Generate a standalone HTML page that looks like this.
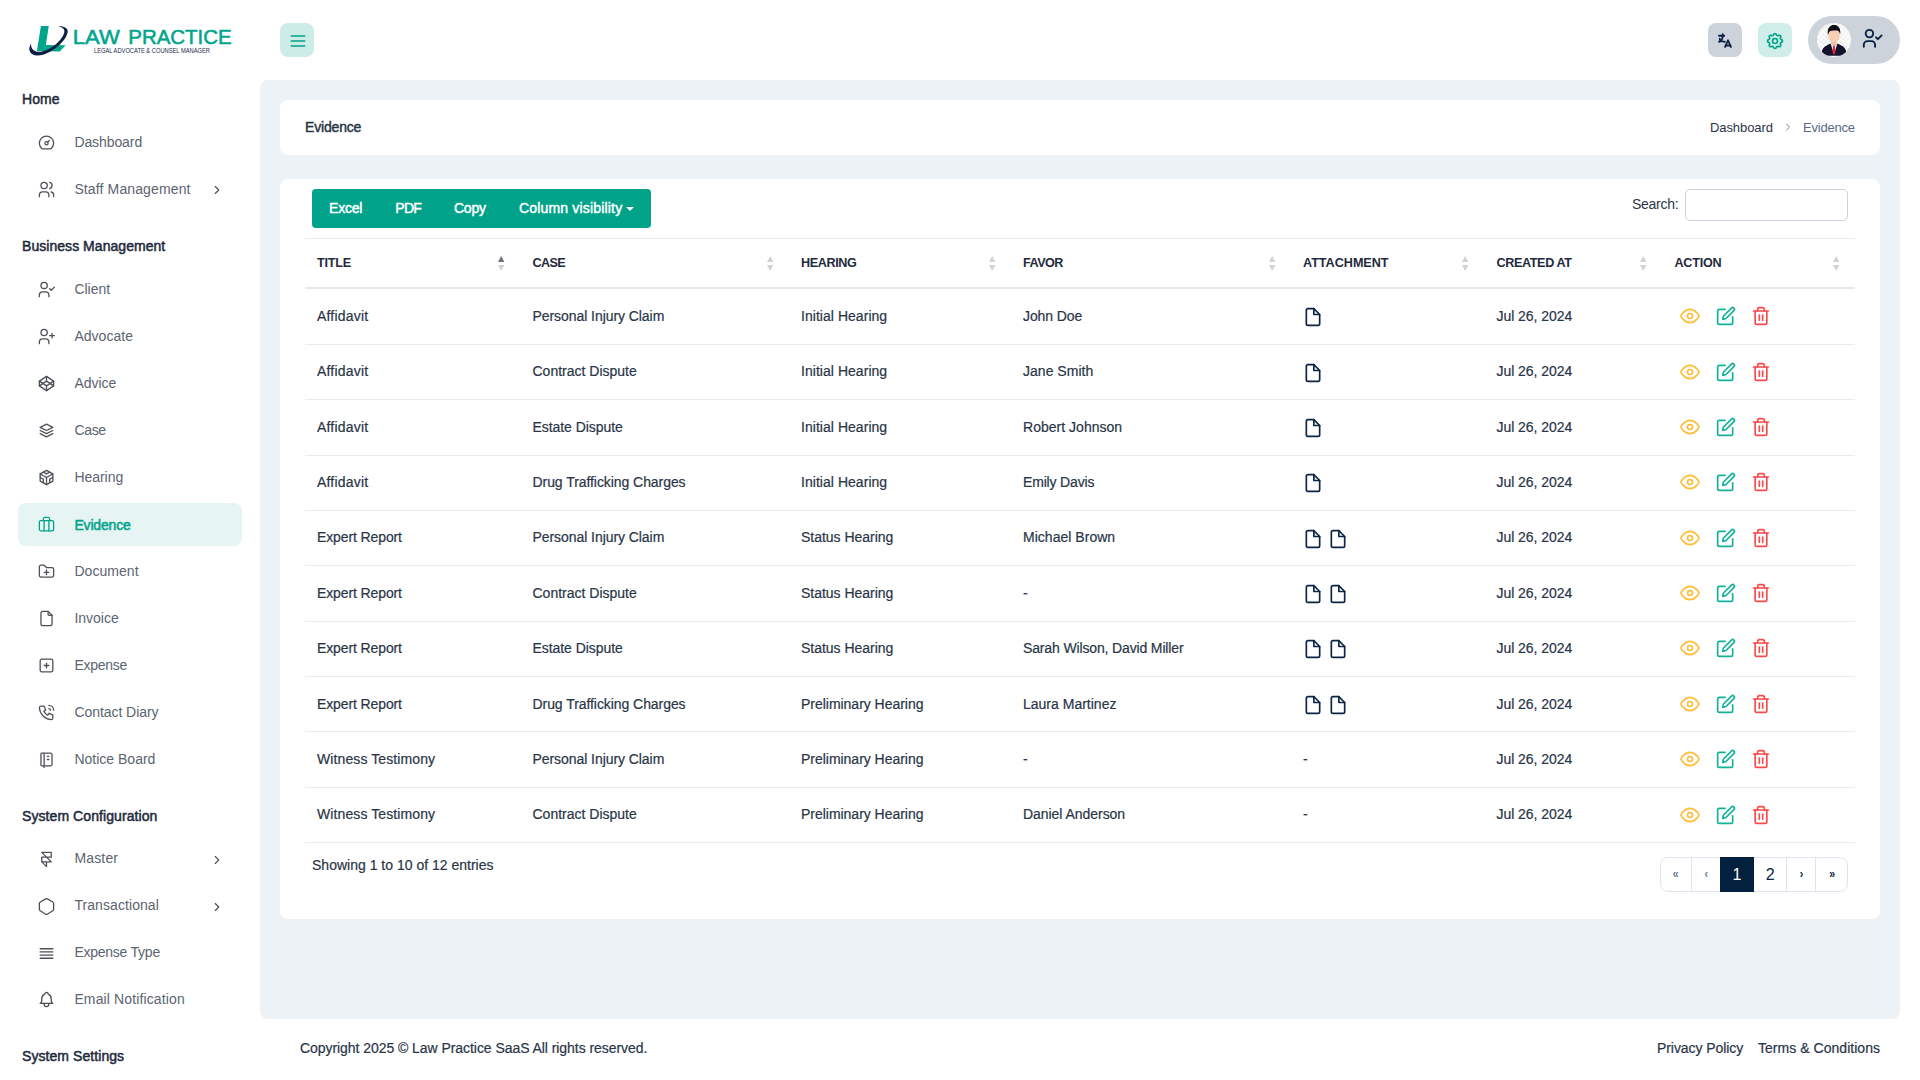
<!DOCTYPE html>
<html lang="en">
<head>
<meta charset="utf-8">
<title>Evidence - Law Practice</title>
<style>
*{box-sizing:border-box;margin:0;padding:0}
html,body{width:1920px;height:1080px;overflow:hidden;background:#fff}
body{font-family:"Liberation Sans",sans-serif;font-size:14px;color:#2a3547;position:relative}
svg{display:block}
.abs{position:absolute;white-space:nowrap}
#sidebar{position:absolute;left:0;top:0;width:260px;height:1080px;background:#fff;overflow:hidden}
.sec{position:absolute;left:22px;font-weight:400;font-size:14px;color:#1f2a3d;-webkit-text-stroke:0.5px #1f2a3d;white-space:nowrap;line-height:20px}
.item{position:absolute;left:18px;width:224px;height:43px;border-radius:8px;color:#5c6470;font-size:14px;white-space:nowrap}
.item .lb{position:absolute;left:56.4px;top:11.5px;line-height:20px}
.item.act{background:#e6f5f3;color:#00a389}
.item.act .lb{-webkit-text-stroke:0.5px #00a389}
.hbtn{position:absolute;top:23px;width:34px;height:34px;border-radius:8px}
#main{position:absolute;left:260px;top:80px;width:1640px;height:939px;background:#edf2f6;border-radius:8px}
.card{position:absolute;background:#fff;border-radius:8px}
.ttl{font-size:14px;color:#2a3547;line-height:20px;-webkit-text-stroke:0.45px #2a3547}
.bc1{font-size:13px;color:#2a3547;line-height:18px}
.bc2{font-size:13px;color:#5a6a85;line-height:18px}
.btng{position:absolute;background:#00a389;border-radius:4px;color:#fff}
.btng span{position:absolute;top:8.6px;line-height:20px;font-size:14px;-webkit-text-stroke:0.45px #fff;white-space:nowrap}
.caret{position:absolute;left:314px;top:17.5px;width:0;height:0;border-left:4px solid transparent;border-right:4px solid transparent;border-top:4px solid #fff}
.th{font-size:12.6px;font-weight:700;color:#1f2a3d;line-height:18px}
.td{font-size:14px;color:#2a3547;line-height:20px;-webkit-text-stroke:0.2px #2a3547}
.pg{position:absolute}
.pg b{position:absolute;left:0;top:0;width:188px;height:35px;border:1px solid #dfe5ef;border-radius:8px;background:#fff}
.pg span{position:absolute;top:0;height:35px;line-height:35px;text-align:center;font-size:16px;color:#0b2545}
.pg span.ar{font-size:13.5px;font-weight:700;line-height:34.5px;transform:scaleX(.78)}
.pg span.on{background:#03203f;color:#fff}
.pg i{position:absolute;top:1px;width:1px;height:33px;background:#dfe5ef}
.ft{font-size:14px;color:#2a3547;line-height:20px;-webkit-text-stroke:0.2px #2a3547}

</style>
</head>
<body>
<div id="sidebar">
<svg class="abs" style="left:24px;top:18px" width="216" height="46" viewBox="0 0 216 46">
<path d="M16.9 8.1 L24.75 8.1 L21.9 27 L41.6 27.3 L35.7 33.6 L12.9 33 Z" fill="#00a58c"/>
<path d="M34.1 8.4 C40 8 45 10.5 43.5 15 C41 25 24 38 13.5 37.5 C5 37 3.5 30.5 7.25 25.4 C6.5 30 9 33.5 15 33.8 C24 34 37 24 40 15.5 C41.5 11.5 39 9 34.1 8.4 Z" fill="#0b1f42"/>
<text y="25.75" font-family="'Liberation Sans',sans-serif" font-size="21" fill="#00a58c" stroke="#00a58c" stroke-width="0.55"><tspan x="48.8" textLength="47" lengthAdjust="spacingAndGlyphs">LAW</tspan> <tspan x="104.3" textLength="103.4" lengthAdjust="spacingAndGlyphs">PRACTICE</tspan></text>
<text x="70" y="34.8" font-family="'Liberation Sans',sans-serif" font-size="6.8" fill="#1c2a4a" textLength="116" lengthAdjust="spacingAndGlyphs">LEGAL ADVOCATE &amp; COUNSEL MANAGER</text>
</svg>
<div class="sec" style="top:89px;letter-spacing:0.055px;">Home</div>
<div class="item" style="top:120.5px"><svg viewBox="0 0 24 24" width="19" height="19" style="position:absolute;left:18.5px;top:12px;" fill="none" stroke="#4d5259" stroke-width="1.65" stroke-linecap="round" stroke-linejoin="round"><path d="M12 13m-2 0a2 2 0 1 0 4 0a2 2 0 1 0 -4 0"/><path d="M13.45 11.55l2.05 -2.05"/><path d="M6.4 20a9 9 0 1 1 11.2 0z"/></svg><span class="lb" style="top:11.5px;letter-spacing:-0.087px;">Dashboard</span></div>
<div class="item" style="top:167.5px"><svg viewBox="0 0 24 24" width="19" height="19" style="position:absolute;left:18.5px;top:12px;" fill="none" stroke="#4d5259" stroke-width="1.65" stroke-linecap="round" stroke-linejoin="round"><path d="M9 7m-4 0a4 4 0 1 0 8 0a4 4 0 1 0 -8 0"/><path d="M3 21v-2a4 4 0 0 1 4 -4h4a4 4 0 0 1 4 4v2"/><path d="M16 3.13a4 4 0 0 1 0 7.75"/><path d="M21 21v-2a4 4 0 0 0 -3 -3.85"/></svg><span class="lb" style="top:11.5px;letter-spacing:0.128px;">Staff Management</span><svg viewBox="0 0 24 24" width="14" height="14" style="position:absolute;left:192px;top:15.5px;" fill="none" stroke="#4d5259" stroke-width="2" stroke-linecap="round" stroke-linejoin="round"><path d="M9 6l6 6l-6 6"/></svg></div>
<div class="sec" style="top:236px;letter-spacing:0.046px;">Business Management</div>
<div class="item" style="top:267.5px"><svg viewBox="0 0 24 24" width="19" height="19" style="position:absolute;left:18.5px;top:12px;" fill="none" stroke="#4d5259" stroke-width="1.65" stroke-linecap="round" stroke-linejoin="round"><circle cx="9" cy="7" r="4"/><path d="M3 21v-2a4 4 0 0 1 4 -4h4a4 4 0 0 1 4 4v2"/><path d="M16 11l2 2l4 -4"/></svg><span class="lb" style="top:11.5px;letter-spacing:-0.023px;">Client</span></div>
<div class="item" style="top:314.5px"><svg viewBox="0 0 24 24" width="19" height="19" style="position:absolute;left:18.5px;top:12px;" fill="none" stroke="#4d5259" stroke-width="1.65" stroke-linecap="round" stroke-linejoin="round"><circle cx="9" cy="7" r="4"/><path d="M3 21v-2a4 4 0 0 1 4 -4h4a4 4 0 0 1 4 4v2"/><path d="M16 11h6m-3 -3v6"/></svg><span class="lb" style="top:11.5px;letter-spacing:0.033px;">Advocate</span></div>
<div class="item" style="top:361.5px"><svg viewBox="0 0 24 24" width="19" height="19" style="position:absolute;left:18.5px;top:12px;" fill="none" stroke="#4d5259" stroke-width="1.65" stroke-linecap="round" stroke-linejoin="round"><path d="M3 15l9 6l9 -6l-9 -6l-9 6"/><path d="M3 9l9 6l9 -6l-9 -6l-9 6"/><path d="M3 9l0 6"/><path d="M21 9l0 6"/><path d="M12 3l0 6"/><path d="M12 15l0 6"/></svg><span class="lb" style="top:11.5px;letter-spacing:-0.01px;">Advice</span></div>
<div class="item" style="top:408.5px"><svg viewBox="0 0 24 24" width="19" height="19" style="position:absolute;left:18.5px;top:12px;" fill="none" stroke="#4d5259" stroke-width="1.65" stroke-linecap="round" stroke-linejoin="round"><path d="M12 4l-8 4l8 4l8 -4l-8 -4"/><path d="M4 12l8 4l8 -4"/><path d="M4 16l8 4l8 -4"/></svg><span class="lb" style="top:11.5px;letter-spacing:-0.324px;">Case</span></div>
<div class="item" style="top:455.5px"><svg viewBox="0 0 24 24" width="19" height="19" style="position:absolute;left:18.5px;top:12px;" fill="none" stroke="#4d5259" stroke-width="1.65" stroke-linecap="round" stroke-linejoin="round"><path d="M20 7.5v9l-4 2.25l-4 2.25l-4 -2.25l-4 -2.25v-9l4 -2.25l4 -2.25l4 2.25z"/><path d="M12 12l4 -2.25l4 -2.25"/><path d="M12 12l0 9"/><path d="M12 12l-4 -2.25l-4 -2.25"/><path d="M20 12l-4 2v4.75"/><path d="M4 12l4 2l0 4.75"/><path d="M8 5.25l4 2.25l4 -2.25"/></svg><span class="lb" style="top:11.5px;letter-spacing:-0.036px;">Hearing</span></div>
<div class="item act" style="top:503.0px"><svg viewBox="0 0 24 24" width="19" height="19" style="position:absolute;left:18.5px;top:12px;" fill="none" stroke="#00a389" stroke-width="1.65" stroke-linecap="round" stroke-linejoin="round"><rect x="3" y="7" width="18" height="13" rx="2"/><path d="M8 7v-2a2 2 0 0 1 2 -2h4a2 2 0 0 1 2 2v2"/><path d="M9 7v13"/><path d="M15 7v13"/></svg><span class="lb" style="top:11.5px;letter-spacing:-0.17px;">Evidence</span></div>
<div class="item" style="top:549.5px"><svg viewBox="0 0 24 24" width="19" height="19" style="position:absolute;left:18.5px;top:12px;" fill="none" stroke="#4d5259" stroke-width="1.65" stroke-linecap="round" stroke-linejoin="round"><path d="M5 4h4l3 3h7a2 2 0 0 1 2 2v8a2 2 0 0 1 -2 2h-14a2 2 0 0 1 -2 -2v-11a2 2 0 0 1 2 -2"/><path d="M12 10v6"/><path d="M9 13h6"/></svg><span class="lb" style="top:11.5px;letter-spacing:0.053px;">Document</span></div>
<div class="item" style="top:596.5px"><svg viewBox="0 0 24 24" width="19" height="19" style="position:absolute;left:18.5px;top:12px;" fill="none" stroke="#4d5259" stroke-width="1.65" stroke-linecap="round" stroke-linejoin="round"><path d="M14 3v4a1 1 0 0 0 1 1h4"/><path d="M17 21h-10a2 2 0 0 1 -2 -2v-14a2 2 0 0 1 2 -2h7l5 5v11a2 2 0 0 1 -2 2z"/></svg><span class="lb" style="top:11.5px;letter-spacing:0.0px;">Invoice</span></div>
<div class="item" style="top:643.5px"><svg viewBox="0 0 24 24" width="19" height="19" style="position:absolute;left:18.5px;top:12px;" fill="none" stroke="#4d5259" stroke-width="1.65" stroke-linecap="round" stroke-linejoin="round"><rect x="4" y="4" width="16" height="16" rx="2"/><path d="M9 12h6"/><path d="M12 9v6"/></svg><span class="lb" style="top:11.5px;letter-spacing:-0.272px;">Expense</span></div>
<div class="item" style="top:690.5px"><svg viewBox="0 0 24 24" width="19" height="19" style="position:absolute;left:18.5px;top:12px;" fill="none" stroke="#4d5259" stroke-width="1.65" stroke-linecap="round" stroke-linejoin="round"><path d="M5 4h4l2 5l-2.5 1.5a11 11 0 0 0 5 5l1.5 -2.5l5 2v4a2 2 0 0 1 -2 2a16 16 0 0 1 -15 -15a2 2 0 0 1 2 -2"/><path d="M15 7a2 2 0 0 1 2 2"/><path d="M15 3a6 6 0 0 1 6 6"/></svg><span class="lb" style="top:11.5px;letter-spacing:-0.054px;">Contact Diary</span></div>
<div class="item" style="top:737.5px"><svg viewBox="0 0 24 24" width="19" height="19" style="position:absolute;left:18.5px;top:12px;" fill="none" stroke="#4d5259" stroke-width="1.65" stroke-linecap="round" stroke-linejoin="round"><path d="M6 4h11a2 2 0 0 1 2 2v12a2 2 0 0 1 -2 2h-11a1 1 0 0 1 -1 -1v-14a1 1 0 0 1 1 -1m3 0v18"/><path d="M13 8l2 0"/><path d="M13 12l2 0"/></svg><span class="lb" style="top:11.5px;letter-spacing:0.007px;">Notice Board</span></div>
<div class="sec" style="top:806px;letter-spacing:0.077px;">System Configuration</div>
<div class="item" style="top:837.5px"><svg viewBox="0 0 24 24" width="19" height="19" style="position:absolute;left:18.5px;top:12px;" fill="none" stroke="#4d5259" stroke-width="1.65" stroke-linecap="round" stroke-linejoin="round"><path d="M6 15h12l-12 -12h12v6h-12v6l6 6v-6"/></svg><span class="lb" style="top:10.2px;letter-spacing:0.169px;">Master</span><svg viewBox="0 0 24 24" width="14" height="14" style="position:absolute;left:192px;top:15.5px;" fill="none" stroke="#4d5259" stroke-width="2" stroke-linecap="round" stroke-linejoin="round"><path d="M9 6l6 6l-6 6"/></svg></div>
<div class="item" style="top:884.8px"><svg viewBox="0 0 24 24" width="19" height="19" style="position:absolute;left:18.5px;top:12px;" fill="none" stroke="#4d5259" stroke-width="1.65" stroke-linecap="round" stroke-linejoin="round"><path d="M19.875 6.27a2.225 2.225 0 0 1 1.125 1.948v7.284c0 .809 -.443 1.555 -1.158 1.948l-6.75 4.27a2.269 2.269 0 0 1 -2.184 0l-6.75 -4.27a2.225 2.225 0 0 1 -1.158 -1.948v-7.285c0 -.809 .443 -1.554 1.158 -1.947l6.75 -3.98a2.33 2.33 0 0 1 2.25 0l6.75 3.98h-.033z"/></svg><span class="lb" style="top:10.2px;letter-spacing:0.078px;">Transactional</span><svg viewBox="0 0 24 24" width="14" height="14" style="position:absolute;left:192px;top:15.5px;" fill="none" stroke="#4d5259" stroke-width="2" stroke-linecap="round" stroke-linejoin="round"><path d="M9 6l6 6l-6 6"/></svg></div>
<div class="item" style="top:931.5px"><svg viewBox="0 0 24 24" width="19" height="19" style="position:absolute;left:18.5px;top:12px;" fill="none" stroke="#4d5259" stroke-width="1.65" stroke-linecap="round" stroke-linejoin="round"><path d="M4 6h16"/><path d="M4 10h16"/><path d="M4 14h16"/><path d="M4 18h16"/></svg><span class="lb" style="top:10.2px;letter-spacing:-0.245px;">Expense Type</span></div>
<div class="item" style="top:978.2px"><svg viewBox="0 0 24 24" width="19" height="19" style="position:absolute;left:18.5px;top:12px;" fill="none" stroke="#4d5259" stroke-width="1.65" stroke-linecap="round" stroke-linejoin="round"><path d="M10 5a2 2 0 1 1 4 0a7 7 0 0 1 4 6v3a4 4 0 0 0 2 3h-16a4 4 0 0 0 2 -3v-3a7 7 0 0 1 4 -6"/><path d="M9 17v1a3 3 0 0 0 6 0v-1"/></svg><span class="lb" style="top:10.7px;letter-spacing:0.13px;">Email Notification</span></div>
<div class="sec" style="top:1046px;letter-spacing:0.069px;">System Settings</div>
</div>
<div class="hbtn" style="left:280px;background:#cdece7"><svg viewBox="0 0 24 24" width="20" height="20" style="position:absolute;left:7.5px;top:8px;" fill="none" stroke="#00a389" stroke-width="2" stroke-linecap="round" stroke-linejoin="round"><path d="M4 6h16"/><path d="M4 12h16"/><path d="M4 18h16"/></svg></div>
<div class="hbtn" style="left:1708px;background:#cdd3db"><svg viewBox="0 0 24 24" width="18" height="18" style="position:absolute;left:8px;top:9.3px;" fill="none" stroke="#0b1f42" stroke-width="2.4" stroke-linecap="round" stroke-linejoin="round"><path d="M4 5h7"/><path d="M9 3v2c0 4.418 -2.239 8 -5 8"/><path d="M5 9c0 2.144 2.952 3.908 6.7 4"/><path d="M12 20l4 -9l4 9"/><path d="M19.1 18h-6.2"/></svg></div>
<div class="hbtn" style="left:1758px;background:#d0eee9"><svg viewBox="0 0 24 24" width="20" height="20" style="position:absolute;left:7.4px;top:7.6px;" fill="none" stroke="#00a389" stroke-width="2" stroke-linecap="round" stroke-linejoin="round"><path d="M10.325 4.317c.426 -1.756 2.924 -1.756 3.35 0a1.724 1.724 0 0 0 2.573 1.066c1.543 -.94 3.31 .826 2.37 2.37a1.724 1.724 0 0 0 1.065 2.572c1.756 .426 1.756 2.924 0 3.35a1.724 1.724 0 0 0 -1.066 2.573c.94 1.543 -.826 3.31 -2.37 2.37a1.724 1.724 0 0 0 -2.572 1.065c-.426 1.756 -2.924 1.756 -3.35 0a1.724 1.724 0 0 0 -2.573 -1.066c-1.543 .94 -3.31 -.826 -2.37 -2.37a1.724 1.724 0 0 0 -1.065 -2.572c-1.756 -.426 -1.756 -2.924 0 -3.35a1.724 1.724 0 0 0 1.066 -2.573c-.94 -1.543 .826 -3.31 2.37 -2.37c1 .608 2.296 .07 2.572 -1.065z"/><path d="M9 12a3 3 0 1 0 6 0a3 3 0 0 0 -6 0"/></svg></div>
<div class="abs" style="left:1808px;top:16px;width:92px;height:48px;border-radius:24px;background:#cdd3db"><svg class="abs" style="left:9px;top:7px" width="34" height="34" viewBox="0 0 34 34">
<defs><clipPath id="avc"><circle cx="17" cy="17" r="17"/></clipPath>
<pattern id="chk" width="5" height="5" patternUnits="userSpaceOnUse"><rect width="5" height="5" fill="#fff"/><rect width="2.5" height="2.5" fill="#efefef"/><rect x="2.5" y="2.5" width="2.5" height="2.5" fill="#efefef"/></pattern></defs>
<g clip-path="url(#avc)"><rect width="34" height="34" fill="url(#chk)"/>
<path d="M4.5 32.3 C4.5 24.5 8 23 13.3 20.8 L20.7 20.8 C26 23 29.5 24.5 29.5 32.3 C25 33 9 33 4.5 32.3 Z" fill="#14142b"/>
<path d="M13.6 20.6 L17 31.5 L20.4 20.6 Z" fill="#e4f1f4"/>
<path d="M16.2 22.3 L17.8 22.3 L18.4 29.5 L17 31.8 L15.6 29.5 Z" fill="#e0263c"/>
<rect x="14.4" y="15" width="5.2" height="7.4" fill="#efc0a4"/>
<ellipse cx="17" cy="12.6" rx="5.8" ry="7" fill="#f7cfb5"/>
<path d="M10.9 12 C9.8 4.5 13.5 2 17 2 C20.8 2 24.2 4.5 23.1 12 C22.7 9 21.6 7.3 19.4 7.5 C16 7.8 13.2 7.2 12.3 8.8 C11.6 10 11.3 11 10.9 12 Z" fill="#0d0d12"/>
</g></svg><svg viewBox="0 0 24 24" width="22.5" height="22.5" style="position:absolute;left:52.8px;top:11.3px;" fill="none" stroke="#0b1f42" stroke-width="2" stroke-linecap="round" stroke-linejoin="round"><circle cx="9" cy="7" r="4"/><path d="M3 21v-2a4 4 0 0 1 4 -4h4a4 4 0 0 1 4 4v2"/><path d="M16 11l2 2l4 -4"/></svg></div>
<div id="main">
<div class="card" style="left:20px;top:20px;width:1600px;height:55px"><span class="abs ttl" style="left:25px;top:17px;letter-spacing:-0.17px;">Evidence</span><span class="abs bc1" style="left:1430px;top:18.7px;letter-spacing:-0.082px;">Dashboard</span><svg viewBox="0 0 24 24" width="12" height="12" style="position:absolute;left:1501.5px;top:20.8px;" fill="none" stroke="#5a6a85" stroke-width="1.6" stroke-linecap="round" stroke-linejoin="round"><path d="M9 6l6 6l-6 6"/></svg><span class="abs bc2" style="left:1523px;top:18.7px;letter-spacing:-0.211px;">Evidence</span></div>
<div class="card" style="left:20px;top:99px;width:1600px;height:740px">
<div class="btng" style="left:32px;top:10px;width:339px;height:39px"><span style="left:17px;letter-spacing:-0.206px;">Excel</span><span style="left:83.3px;letter-spacing:-0.734px;">PDF</span><span style="left:142px;letter-spacing:-0.238px;">Copy</span><span style="left:207px;letter-spacing:0.173px;">Column visibility</span><i class="caret"></i></div>
<span class="abs" style="left:1352px;top:16px;line-height:18px;color:#2a3547;letter-spacing:-0.263px;">Search:</span>
<div class="abs" style="left:1405px;top:10px;width:163px;height:32px;border:1px solid #c9d1dc;border-radius:5px;background:#fff"></div>
<div class="abs" style="left:25px;top:59px;width:1550px;height:1px;background:#ebebeb"></div>
<span class="abs th" style="left:37px;top:75px;letter-spacing:-0.181px;">TITLE</span>
<svg class="abs" style="left:218.3px;top:77px" width="6.4" height="15" viewBox="0 0 7 15" preserveAspectRatio="none"><path d="M3.5 0 L7 6 L0 6 Z" fill="#6c757d"/><path d="M0 9 L7 9 L3.5 15 Z" fill="#d2d2d2"/></svg>
<span class="abs th" style="left:252.5px;top:75px;letter-spacing:-0.609px;">CASE</span>
<svg class="abs" style="left:487.3px;top:77px" width="6.4" height="15" viewBox="0 0 7 15" preserveAspectRatio="none"><path d="M3.5 0 L7 6 L0 6 Z" fill="#d2d2d2"/><path d="M0 9 L7 9 L3.5 15 Z" fill="#d2d2d2"/></svg>
<span class="abs th" style="left:521px;top:75px;letter-spacing:-0.384px;">HEARING</span>
<svg class="abs" style="left:709.3px;top:77px" width="6.4" height="15" viewBox="0 0 7 15" preserveAspectRatio="none"><path d="M3.5 0 L7 6 L0 6 Z" fill="#d2d2d2"/><path d="M0 9 L7 9 L3.5 15 Z" fill="#d2d2d2"/></svg>
<span class="abs th" style="left:743px;top:75px;letter-spacing:-0.512px;">FAVOR</span>
<svg class="abs" style="left:989.3px;top:77px" width="6.4" height="15" viewBox="0 0 7 15" preserveAspectRatio="none"><path d="M3.5 0 L7 6 L0 6 Z" fill="#d2d2d2"/><path d="M0 9 L7 9 L3.5 15 Z" fill="#d2d2d2"/></svg>
<span class="abs th" style="left:1023px;top:75px;letter-spacing:-0.003px;">ATTACHMENT</span>
<svg class="abs" style="left:1182.3px;top:77px" width="6.4" height="15" viewBox="0 0 7 15" preserveAspectRatio="none"><path d="M3.5 0 L7 6 L0 6 Z" fill="#d2d2d2"/><path d="M0 9 L7 9 L3.5 15 Z" fill="#d2d2d2"/></svg>
<span class="abs th" style="left:1216.5px;top:75px;letter-spacing:-0.366px;">CREATED AT</span>
<svg class="abs" style="left:1360.3px;top:77px" width="6.4" height="15" viewBox="0 0 7 15" preserveAspectRatio="none"><path d="M3.5 0 L7 6 L0 6 Z" fill="#d2d2d2"/><path d="M0 9 L7 9 L3.5 15 Z" fill="#d2d2d2"/></svg>
<span class="abs th" style="left:1394.5px;top:75px;letter-spacing:-0.224px;">ACTION</span>
<svg class="abs" style="left:1553.3px;top:77px" width="6.4" height="15" viewBox="0 0 7 15" preserveAspectRatio="none"><path d="M3.5 0 L7 6 L0 6 Z" fill="#d2d2d2"/><path d="M0 9 L7 9 L3.5 15 Z" fill="#d2d2d2"/></svg>
<div class="abs" style="left:25px;top:108px;width:1550px;height:2px;background:#e8e8e8"></div>
<span class="abs td" style="left:37px;top:126.94999999999999px;letter-spacing:0.191px;">Affidavit</span>
<span class="abs td" style="left:252.5px;top:126.94999999999999px;letter-spacing:-0.063px;">Personal Injury Claim</span>
<span class="abs td" style="left:521px;top:126.94999999999999px;letter-spacing:0.039px;">Initial Hearing</span>
<span class="abs td" style="left:743px;top:126.94999999999999px;letter-spacing:-0.088px;">John Doe</span>
<svg viewBox="0 0 24 24" width="20" height="20" style="position:absolute;left:1023.2px;top:128.05px;" fill="none" stroke="#0b2545" stroke-width="2" stroke-linecap="round" stroke-linejoin="round"><path d="M13 2H6a2 2 0 0 0-2 2v16a2 2 0 0 0 2 2h12a2 2 0 0 0 2-2V9z"/><polyline points="13 2 13 9 20 9"/></svg>
<span class="abs td" style="left:1216.5px;top:126.94999999999999px;letter-spacing:-0.044px;">Jul 26, 2024</span>
<svg viewBox="0 0 24 24" width="20" height="20" style="position:absolute;left:1400px;top:127.05000000000001px;" fill="none" stroke="#ffbc34" stroke-width="2" stroke-linecap="round" stroke-linejoin="round"><path d="M1 12s4-8 11-8 11 8 11 8-4 8-11 8-11-8-11-8z"/><circle cx="12" cy="12" r="3"/></svg>
<svg viewBox="0 0 24 24" width="20" height="20" style="position:absolute;left:1436px;top:127.09999999999997px;" fill="none" stroke="#13b19a" stroke-width="2" stroke-linecap="round" stroke-linejoin="round"><path d="M11 4H4a2 2 0 0 0-2 2v14a2 2 0 0 0 2 2h14a2 2 0 0 0 2-2v-7"/><path d="M18.5 2.5a2.121 2.121 0 0 1 3 3L12 15l-4 1 1-4 9.5-9.5z"/></svg>
<svg viewBox="0 0 24 24" width="20" height="20" style="position:absolute;left:1471px;top:127.09999999999997px;" fill="none" stroke="#fa4b4b" stroke-width="2" stroke-linecap="round" stroke-linejoin="round"><polyline points="3 6 5 6 21 6"/><path d="M19 6v14a2 2 0 0 1-2 2H7a2 2 0 0 1-2-2V6m3 0V4a2 2 0 0 1 2-2h4a2 2 0 0 1 2 2v2"/><line x1="10" y1="11" x2="10" y2="17"/><line x1="14" y1="11" x2="14" y2="17"/></svg>
<div class="abs" style="left:25px;top:164.5px;width:1550px;height:1px;background:#ebebeb"></div>
<span class="abs td" style="left:37px;top:182.45px;letter-spacing:0.191px;">Affidavit</span>
<span class="abs td" style="left:252.5px;top:182.45px;letter-spacing:0.0px;">Contract Dispute</span>
<span class="abs td" style="left:521px;top:182.45px;letter-spacing:0.039px;">Initial Hearing</span>
<span class="abs td" style="left:743px;top:182.45px;letter-spacing:0.022px;">Jane Smith</span>
<svg viewBox="0 0 24 24" width="20" height="20" style="position:absolute;left:1023.2px;top:183.55px;" fill="none" stroke="#0b2545" stroke-width="2" stroke-linecap="round" stroke-linejoin="round"><path d="M13 2H6a2 2 0 0 0-2 2v16a2 2 0 0 0 2 2h12a2 2 0 0 0 2-2V9z"/><polyline points="13 2 13 9 20 9"/></svg>
<span class="abs td" style="left:1216.5px;top:182.45px;letter-spacing:-0.044px;">Jul 26, 2024</span>
<svg viewBox="0 0 24 24" width="20" height="20" style="position:absolute;left:1400px;top:182.55px;" fill="none" stroke="#ffbc34" stroke-width="2" stroke-linecap="round" stroke-linejoin="round"><path d="M1 12s4-8 11-8 11 8 11 8-4 8-11 8-11-8-11-8z"/><circle cx="12" cy="12" r="3"/></svg>
<svg viewBox="0 0 24 24" width="20" height="20" style="position:absolute;left:1436px;top:182.59999999999997px;" fill="none" stroke="#13b19a" stroke-width="2" stroke-linecap="round" stroke-linejoin="round"><path d="M11 4H4a2 2 0 0 0-2 2v14a2 2 0 0 0 2 2h14a2 2 0 0 0 2-2v-7"/><path d="M18.5 2.5a2.121 2.121 0 0 1 3 3L12 15l-4 1 1-4 9.5-9.5z"/></svg>
<svg viewBox="0 0 24 24" width="20" height="20" style="position:absolute;left:1471px;top:182.59999999999997px;" fill="none" stroke="#fa4b4b" stroke-width="2" stroke-linecap="round" stroke-linejoin="round"><polyline points="3 6 5 6 21 6"/><path d="M19 6v14a2 2 0 0 1-2 2H7a2 2 0 0 1-2-2V6m3 0V4a2 2 0 0 1 2-2h4a2 2 0 0 1 2 2v2"/><line x1="10" y1="11" x2="10" y2="17"/><line x1="14" y1="11" x2="14" y2="17"/></svg>
<div class="abs" style="left:25px;top:220.0px;width:1550px;height:1px;background:#ebebeb"></div>
<span class="abs td" style="left:37px;top:237.95px;letter-spacing:0.191px;">Affidavit</span>
<span class="abs td" style="left:252.5px;top:237.95px;letter-spacing:-0.057px;">Estate Dispute</span>
<span class="abs td" style="left:521px;top:237.95px;letter-spacing:0.039px;">Initial Hearing</span>
<span class="abs td" style="left:743px;top:237.95px;letter-spacing:0.021px;">Robert Johnson</span>
<svg viewBox="0 0 24 24" width="20" height="20" style="position:absolute;left:1023.2px;top:239.05px;" fill="none" stroke="#0b2545" stroke-width="2" stroke-linecap="round" stroke-linejoin="round"><path d="M13 2H6a2 2 0 0 0-2 2v16a2 2 0 0 0 2 2h12a2 2 0 0 0 2-2V9z"/><polyline points="13 2 13 9 20 9"/></svg>
<span class="abs td" style="left:1216.5px;top:237.95px;letter-spacing:-0.044px;">Jul 26, 2024</span>
<svg viewBox="0 0 24 24" width="20" height="20" style="position:absolute;left:1400px;top:238.05px;" fill="none" stroke="#ffbc34" stroke-width="2" stroke-linecap="round" stroke-linejoin="round"><path d="M1 12s4-8 11-8 11 8 11 8-4 8-11 8-11-8-11-8z"/><circle cx="12" cy="12" r="3"/></svg>
<svg viewBox="0 0 24 24" width="20" height="20" style="position:absolute;left:1436px;top:238.09999999999997px;" fill="none" stroke="#13b19a" stroke-width="2" stroke-linecap="round" stroke-linejoin="round"><path d="M11 4H4a2 2 0 0 0-2 2v14a2 2 0 0 0 2 2h14a2 2 0 0 0 2-2v-7"/><path d="M18.5 2.5a2.121 2.121 0 0 1 3 3L12 15l-4 1 1-4 9.5-9.5z"/></svg>
<svg viewBox="0 0 24 24" width="20" height="20" style="position:absolute;left:1471px;top:238.09999999999997px;" fill="none" stroke="#fa4b4b" stroke-width="2" stroke-linecap="round" stroke-linejoin="round"><polyline points="3 6 5 6 21 6"/><path d="M19 6v14a2 2 0 0 1-2 2H7a2 2 0 0 1-2-2V6m3 0V4a2 2 0 0 1 2-2h4a2 2 0 0 1 2 2v2"/><line x1="10" y1="11" x2="10" y2="17"/><line x1="14" y1="11" x2="14" y2="17"/></svg>
<div class="abs" style="left:25px;top:275.5px;width:1550px;height:1px;background:#ebebeb"></div>
<span class="abs td" style="left:37px;top:293.2px;letter-spacing:0.191px;">Affidavit</span>
<span class="abs td" style="left:252.5px;top:293.2px;letter-spacing:-0.064px;">Drug Trafficking Charges</span>
<span class="abs td" style="left:521px;top:293.2px;letter-spacing:0.039px;">Initial Hearing</span>
<span class="abs td" style="left:743px;top:293.2px;letter-spacing:-0.169px;">Emily Davis</span>
<svg viewBox="0 0 24 24" width="20" height="20" style="position:absolute;left:1023.2px;top:294.3px;" fill="none" stroke="#0b2545" stroke-width="2" stroke-linecap="round" stroke-linejoin="round"><path d="M13 2H6a2 2 0 0 0-2 2v16a2 2 0 0 0 2 2h12a2 2 0 0 0 2-2V9z"/><polyline points="13 2 13 9 20 9"/></svg>
<span class="abs td" style="left:1216.5px;top:293.2px;letter-spacing:-0.044px;">Jul 26, 2024</span>
<svg viewBox="0 0 24 24" width="20" height="20" style="position:absolute;left:1400px;top:293.3px;" fill="none" stroke="#ffbc34" stroke-width="2" stroke-linecap="round" stroke-linejoin="round"><path d="M1 12s4-8 11-8 11 8 11 8-4 8-11 8-11-8-11-8z"/><circle cx="12" cy="12" r="3"/></svg>
<svg viewBox="0 0 24 24" width="20" height="20" style="position:absolute;left:1436px;top:293.34999999999997px;" fill="none" stroke="#13b19a" stroke-width="2" stroke-linecap="round" stroke-linejoin="round"><path d="M11 4H4a2 2 0 0 0-2 2v14a2 2 0 0 0 2 2h14a2 2 0 0 0 2-2v-7"/><path d="M18.5 2.5a2.121 2.121 0 0 1 3 3L12 15l-4 1 1-4 9.5-9.5z"/></svg>
<svg viewBox="0 0 24 24" width="20" height="20" style="position:absolute;left:1471px;top:293.34999999999997px;" fill="none" stroke="#fa4b4b" stroke-width="2" stroke-linecap="round" stroke-linejoin="round"><polyline points="3 6 5 6 21 6"/><path d="M19 6v14a2 2 0 0 1-2 2H7a2 2 0 0 1-2-2V6m3 0V4a2 2 0 0 1 2-2h4a2 2 0 0 1 2 2v2"/><line x1="10" y1="11" x2="10" y2="17"/><line x1="14" y1="11" x2="14" y2="17"/></svg>
<div class="abs" style="left:25px;top:330.5px;width:1550px;height:1px;background:#ebebeb"></div>
<span class="abs td" style="left:37px;top:348.45000000000005px;letter-spacing:-0.114px;">Expert Report</span>
<span class="abs td" style="left:252.5px;top:348.45000000000005px;letter-spacing:-0.063px;">Personal Injury Claim</span>
<span class="abs td" style="left:521px;top:348.45000000000005px;letter-spacing:-0.023px;">Status Hearing</span>
<span class="abs td" style="left:743px;top:348.45000000000005px;letter-spacing:0.025px;">Michael Brown</span>
<svg viewBox="0 0 24 24" width="20" height="20" style="position:absolute;left:1023.2px;top:349.55000000000007px;" fill="none" stroke="#0b2545" stroke-width="2" stroke-linecap="round" stroke-linejoin="round"><path d="M13 2H6a2 2 0 0 0-2 2v16a2 2 0 0 0 2 2h12a2 2 0 0 0 2-2V9z"/><polyline points="13 2 13 9 20 9"/></svg>
<svg viewBox="0 0 24 24" width="20" height="20" style="position:absolute;left:1047.5px;top:349.55000000000007px;" fill="none" stroke="#0b2545" stroke-width="2" stroke-linecap="round" stroke-linejoin="round"><path d="M13 2H6a2 2 0 0 0-2 2v16a2 2 0 0 0 2 2h12a2 2 0 0 0 2-2V9z"/><polyline points="13 2 13 9 20 9"/></svg>
<span class="abs td" style="left:1216.5px;top:348.45000000000005px;letter-spacing:-0.044px;">Jul 26, 2024</span>
<svg viewBox="0 0 24 24" width="20" height="20" style="position:absolute;left:1400px;top:348.55000000000007px;" fill="none" stroke="#ffbc34" stroke-width="2" stroke-linecap="round" stroke-linejoin="round"><path d="M1 12s4-8 11-8 11 8 11 8-4 8-11 8-11-8-11-8z"/><circle cx="12" cy="12" r="3"/></svg>
<svg viewBox="0 0 24 24" width="20" height="20" style="position:absolute;left:1436px;top:348.6px;" fill="none" stroke="#13b19a" stroke-width="2" stroke-linecap="round" stroke-linejoin="round"><path d="M11 4H4a2 2 0 0 0-2 2v14a2 2 0 0 0 2 2h14a2 2 0 0 0 2-2v-7"/><path d="M18.5 2.5a2.121 2.121 0 0 1 3 3L12 15l-4 1 1-4 9.5-9.5z"/></svg>
<svg viewBox="0 0 24 24" width="20" height="20" style="position:absolute;left:1471px;top:348.6px;" fill="none" stroke="#fa4b4b" stroke-width="2" stroke-linecap="round" stroke-linejoin="round"><polyline points="3 6 5 6 21 6"/><path d="M19 6v14a2 2 0 0 1-2 2H7a2 2 0 0 1-2-2V6m3 0V4a2 2 0 0 1 2-2h4a2 2 0 0 1 2 2v2"/><line x1="10" y1="11" x2="10" y2="17"/><line x1="14" y1="11" x2="14" y2="17"/></svg>
<div class="abs" style="left:25px;top:386.0px;width:1550px;height:1px;background:#ebebeb"></div>
<span class="abs td" style="left:37px;top:403.95000000000005px;letter-spacing:-0.114px;">Expert Report</span>
<span class="abs td" style="left:252.5px;top:403.95000000000005px;letter-spacing:0.0px;">Contract Dispute</span>
<span class="abs td" style="left:521px;top:403.95000000000005px;letter-spacing:-0.023px;">Status Hearing</span>
<span class="abs td" style="left:743px;top:403.95000000000005px;letter-spacing:-0.797px;">-</span>
<svg viewBox="0 0 24 24" width="20" height="20" style="position:absolute;left:1023.2px;top:405.05000000000007px;" fill="none" stroke="#0b2545" stroke-width="2" stroke-linecap="round" stroke-linejoin="round"><path d="M13 2H6a2 2 0 0 0-2 2v16a2 2 0 0 0 2 2h12a2 2 0 0 0 2-2V9z"/><polyline points="13 2 13 9 20 9"/></svg>
<svg viewBox="0 0 24 24" width="20" height="20" style="position:absolute;left:1047.5px;top:405.05000000000007px;" fill="none" stroke="#0b2545" stroke-width="2" stroke-linecap="round" stroke-linejoin="round"><path d="M13 2H6a2 2 0 0 0-2 2v16a2 2 0 0 0 2 2h12a2 2 0 0 0 2-2V9z"/><polyline points="13 2 13 9 20 9"/></svg>
<span class="abs td" style="left:1216.5px;top:403.95000000000005px;letter-spacing:-0.044px;">Jul 26, 2024</span>
<svg viewBox="0 0 24 24" width="20" height="20" style="position:absolute;left:1400px;top:404.05000000000007px;" fill="none" stroke="#ffbc34" stroke-width="2" stroke-linecap="round" stroke-linejoin="round"><path d="M1 12s4-8 11-8 11 8 11 8-4 8-11 8-11-8-11-8z"/><circle cx="12" cy="12" r="3"/></svg>
<svg viewBox="0 0 24 24" width="20" height="20" style="position:absolute;left:1436px;top:404.1px;" fill="none" stroke="#13b19a" stroke-width="2" stroke-linecap="round" stroke-linejoin="round"><path d="M11 4H4a2 2 0 0 0-2 2v14a2 2 0 0 0 2 2h14a2 2 0 0 0 2-2v-7"/><path d="M18.5 2.5a2.121 2.121 0 0 1 3 3L12 15l-4 1 1-4 9.5-9.5z"/></svg>
<svg viewBox="0 0 24 24" width="20" height="20" style="position:absolute;left:1471px;top:404.1px;" fill="none" stroke="#fa4b4b" stroke-width="2" stroke-linecap="round" stroke-linejoin="round"><polyline points="3 6 5 6 21 6"/><path d="M19 6v14a2 2 0 0 1-2 2H7a2 2 0 0 1-2-2V6m3 0V4a2 2 0 0 1 2-2h4a2 2 0 0 1 2 2v2"/><line x1="10" y1="11" x2="10" y2="17"/><line x1="14" y1="11" x2="14" y2="17"/></svg>
<div class="abs" style="left:25px;top:441.5px;width:1550px;height:1px;background:#ebebeb"></div>
<span class="abs td" style="left:37px;top:459.20000000000005px;letter-spacing:-0.114px;">Expert Report</span>
<span class="abs td" style="left:252.5px;top:459.20000000000005px;letter-spacing:-0.057px;">Estate Dispute</span>
<span class="abs td" style="left:521px;top:459.20000000000005px;letter-spacing:-0.023px;">Status Hearing</span>
<span class="abs td" style="left:743px;top:459.20000000000005px;letter-spacing:-0.143px;">Sarah Wilson, David Miller</span>
<svg viewBox="0 0 24 24" width="20" height="20" style="position:absolute;left:1023.2px;top:460.30000000000007px;" fill="none" stroke="#0b2545" stroke-width="2" stroke-linecap="round" stroke-linejoin="round"><path d="M13 2H6a2 2 0 0 0-2 2v16a2 2 0 0 0 2 2h12a2 2 0 0 0 2-2V9z"/><polyline points="13 2 13 9 20 9"/></svg>
<svg viewBox="0 0 24 24" width="20" height="20" style="position:absolute;left:1047.5px;top:460.30000000000007px;" fill="none" stroke="#0b2545" stroke-width="2" stroke-linecap="round" stroke-linejoin="round"><path d="M13 2H6a2 2 0 0 0-2 2v16a2 2 0 0 0 2 2h12a2 2 0 0 0 2-2V9z"/><polyline points="13 2 13 9 20 9"/></svg>
<span class="abs td" style="left:1216.5px;top:459.20000000000005px;letter-spacing:-0.044px;">Jul 26, 2024</span>
<svg viewBox="0 0 24 24" width="20" height="20" style="position:absolute;left:1400px;top:459.30000000000007px;" fill="none" stroke="#ffbc34" stroke-width="2" stroke-linecap="round" stroke-linejoin="round"><path d="M1 12s4-8 11-8 11 8 11 8-4 8-11 8-11-8-11-8z"/><circle cx="12" cy="12" r="3"/></svg>
<svg viewBox="0 0 24 24" width="20" height="20" style="position:absolute;left:1436px;top:459.35px;" fill="none" stroke="#13b19a" stroke-width="2" stroke-linecap="round" stroke-linejoin="round"><path d="M11 4H4a2 2 0 0 0-2 2v14a2 2 0 0 0 2 2h14a2 2 0 0 0 2-2v-7"/><path d="M18.5 2.5a2.121 2.121 0 0 1 3 3L12 15l-4 1 1-4 9.5-9.5z"/></svg>
<svg viewBox="0 0 24 24" width="20" height="20" style="position:absolute;left:1471px;top:459.35px;" fill="none" stroke="#fa4b4b" stroke-width="2" stroke-linecap="round" stroke-linejoin="round"><polyline points="3 6 5 6 21 6"/><path d="M19 6v14a2 2 0 0 1-2 2H7a2 2 0 0 1-2-2V6m3 0V4a2 2 0 0 1 2-2h4a2 2 0 0 1 2 2v2"/><line x1="10" y1="11" x2="10" y2="17"/><line x1="14" y1="11" x2="14" y2="17"/></svg>
<div class="abs" style="left:25px;top:496.5px;width:1550px;height:1px;background:#ebebeb"></div>
<span class="abs td" style="left:37px;top:515.0500000000001px;letter-spacing:-0.114px;">Expert Report</span>
<span class="abs td" style="left:252.5px;top:515.0500000000001px;letter-spacing:-0.064px;">Drug Trafficking Charges</span>
<span class="abs td" style="left:521px;top:515.0500000000001px;letter-spacing:-0.025px;">Preliminary Hearing</span>
<span class="abs td" style="left:743px;top:515.0500000000001px;letter-spacing:0.004px;">Laura Martinez</span>
<svg viewBox="0 0 24 24" width="20" height="20" style="position:absolute;left:1023.2px;top:516.1500000000001px;" fill="none" stroke="#0b2545" stroke-width="2" stroke-linecap="round" stroke-linejoin="round"><path d="M13 2H6a2 2 0 0 0-2 2v16a2 2 0 0 0 2 2h12a2 2 0 0 0 2-2V9z"/><polyline points="13 2 13 9 20 9"/></svg>
<svg viewBox="0 0 24 24" width="20" height="20" style="position:absolute;left:1047.5px;top:516.1500000000001px;" fill="none" stroke="#0b2545" stroke-width="2" stroke-linecap="round" stroke-linejoin="round"><path d="M13 2H6a2 2 0 0 0-2 2v16a2 2 0 0 0 2 2h12a2 2 0 0 0 2-2V9z"/><polyline points="13 2 13 9 20 9"/></svg>
<span class="abs td" style="left:1216.5px;top:515.0500000000001px;letter-spacing:-0.044px;">Jul 26, 2024</span>
<svg viewBox="0 0 24 24" width="20" height="20" style="position:absolute;left:1400px;top:515.1500000000001px;" fill="none" stroke="#ffbc34" stroke-width="2" stroke-linecap="round" stroke-linejoin="round"><path d="M1 12s4-8 11-8 11 8 11 8-4 8-11 8-11-8-11-8z"/><circle cx="12" cy="12" r="3"/></svg>
<svg viewBox="0 0 24 24" width="20" height="20" style="position:absolute;left:1436px;top:515.2px;" fill="none" stroke="#13b19a" stroke-width="2" stroke-linecap="round" stroke-linejoin="round"><path d="M11 4H4a2 2 0 0 0-2 2v14a2 2 0 0 0 2 2h14a2 2 0 0 0 2-2v-7"/><path d="M18.5 2.5a2.121 2.121 0 0 1 3 3L12 15l-4 1 1-4 9.5-9.5z"/></svg>
<svg viewBox="0 0 24 24" width="20" height="20" style="position:absolute;left:1471px;top:515.2px;" fill="none" stroke="#fa4b4b" stroke-width="2" stroke-linecap="round" stroke-linejoin="round"><polyline points="3 6 5 6 21 6"/><path d="M19 6v14a2 2 0 0 1-2 2H7a2 2 0 0 1-2-2V6m3 0V4a2 2 0 0 1 2-2h4a2 2 0 0 1 2 2v2"/><line x1="10" y1="11" x2="10" y2="17"/><line x1="14" y1="11" x2="14" y2="17"/></svg>
<div class="abs" style="left:25px;top:552.0px;width:1550px;height:1px;background:#ebebeb"></div>
<span class="abs td" style="left:37px;top:569.95px;letter-spacing:0.099px;">Witness Testimony</span>
<span class="abs td" style="left:252.5px;top:569.95px;letter-spacing:-0.063px;">Personal Injury Claim</span>
<span class="abs td" style="left:521px;top:569.95px;letter-spacing:-0.025px;">Preliminary Hearing</span>
<span class="abs td" style="left:743px;top:569.95px;letter-spacing:-0.797px;">-</span>
<span class="abs td" style="left:1023px;top:569.95px">-</span>
<span class="abs td" style="left:1216.5px;top:569.95px;letter-spacing:-0.044px;">Jul 26, 2024</span>
<svg viewBox="0 0 24 24" width="20" height="20" style="position:absolute;left:1400px;top:570.0500000000001px;" fill="none" stroke="#ffbc34" stroke-width="2" stroke-linecap="round" stroke-linejoin="round"><path d="M1 12s4-8 11-8 11 8 11 8-4 8-11 8-11-8-11-8z"/><circle cx="12" cy="12" r="3"/></svg>
<svg viewBox="0 0 24 24" width="20" height="20" style="position:absolute;left:1436px;top:570.1px;" fill="none" stroke="#13b19a" stroke-width="2" stroke-linecap="round" stroke-linejoin="round"><path d="M11 4H4a2 2 0 0 0-2 2v14a2 2 0 0 0 2 2h14a2 2 0 0 0 2-2v-7"/><path d="M18.5 2.5a2.121 2.121 0 0 1 3 3L12 15l-4 1 1-4 9.5-9.5z"/></svg>
<svg viewBox="0 0 24 24" width="20" height="20" style="position:absolute;left:1471px;top:570.1px;" fill="none" stroke="#fa4b4b" stroke-width="2" stroke-linecap="round" stroke-linejoin="round"><polyline points="3 6 5 6 21 6"/><path d="M19 6v14a2 2 0 0 1-2 2H7a2 2 0 0 1-2-2V6m3 0V4a2 2 0 0 1 2-2h4a2 2 0 0 1 2 2v2"/><line x1="10" y1="11" x2="10" y2="17"/><line x1="14" y1="11" x2="14" y2="17"/></svg>
<div class="abs" style="left:25px;top:607.5px;width:1550px;height:1px;background:#ebebeb"></div>
<span class="abs td" style="left:37px;top:625.45px;letter-spacing:0.099px;">Witness Testimony</span>
<span class="abs td" style="left:252.5px;top:625.45px;letter-spacing:0.0px;">Contract Dispute</span>
<span class="abs td" style="left:521px;top:625.45px;letter-spacing:-0.025px;">Preliminary Hearing</span>
<span class="abs td" style="left:743px;top:625.45px;letter-spacing:-0.043px;">Daniel Anderson</span>
<span class="abs td" style="left:1023px;top:625.45px">-</span>
<span class="abs td" style="left:1216.5px;top:625.45px;letter-spacing:-0.044px;">Jul 26, 2024</span>
<svg viewBox="0 0 24 24" width="20" height="20" style="position:absolute;left:1400px;top:625.5500000000001px;" fill="none" stroke="#ffbc34" stroke-width="2" stroke-linecap="round" stroke-linejoin="round"><path d="M1 12s4-8 11-8 11 8 11 8-4 8-11 8-11-8-11-8z"/><circle cx="12" cy="12" r="3"/></svg>
<svg viewBox="0 0 24 24" width="20" height="20" style="position:absolute;left:1436px;top:625.6px;" fill="none" stroke="#13b19a" stroke-width="2" stroke-linecap="round" stroke-linejoin="round"><path d="M11 4H4a2 2 0 0 0-2 2v14a2 2 0 0 0 2 2h14a2 2 0 0 0 2-2v-7"/><path d="M18.5 2.5a2.121 2.121 0 0 1 3 3L12 15l-4 1 1-4 9.5-9.5z"/></svg>
<svg viewBox="0 0 24 24" width="20" height="20" style="position:absolute;left:1471px;top:625.6px;" fill="none" stroke="#fa4b4b" stroke-width="2" stroke-linecap="round" stroke-linejoin="round"><polyline points="3 6 5 6 21 6"/><path d="M19 6v14a2 2 0 0 1-2 2H7a2 2 0 0 1-2-2V6m3 0V4a2 2 0 0 1 2-2h4a2 2 0 0 1 2 2v2"/><line x1="10" y1="11" x2="10" y2="17"/><line x1="14" y1="11" x2="14" y2="17"/></svg>
<div class="abs" style="left:25px;top:663.0px;width:1550px;height:1px;background:#ebebeb"></div>
<span class="abs td" style="left:32px;top:676px;letter-spacing:0.006px;">Showing 1 to 10 of 12 entries</span>
<div class="pg" style="left:1380px;top:678px;width:188px;height:35px"><b></b><span class="ar" style="left:0;width:31.5px;color:#6b7a93">«</span><i style="left:31px"></i><span class="ar" style="left:31.5px;width:28.5px;color:#6b7a93">‹</span><span class="on" style="left:60px;width:34px">1</span><span style="left:94px;width:32.5px">2</span><i style="left:126px"></i><span class="ar" style="left:126.5px;width:29px">›</span><i style="left:155px"></i><span class="ar" style="left:155.5px;width:32.5px">»</span></div>
</div>
</div>
<span class="abs ft" style="left:300px;top:1038px;letter-spacing:-0.056px;">Copyright 2025 © Law Practice SaaS All rights reserved.</span><span class="abs ft" style="left:1657px;top:1038px;letter-spacing:-0.068px;">Privacy Policy</span><span class="abs ft" style="left:1758px;top:1038px;letter-spacing:0.037px;">Terms &amp; Conditions</span>
</body>
</html>
